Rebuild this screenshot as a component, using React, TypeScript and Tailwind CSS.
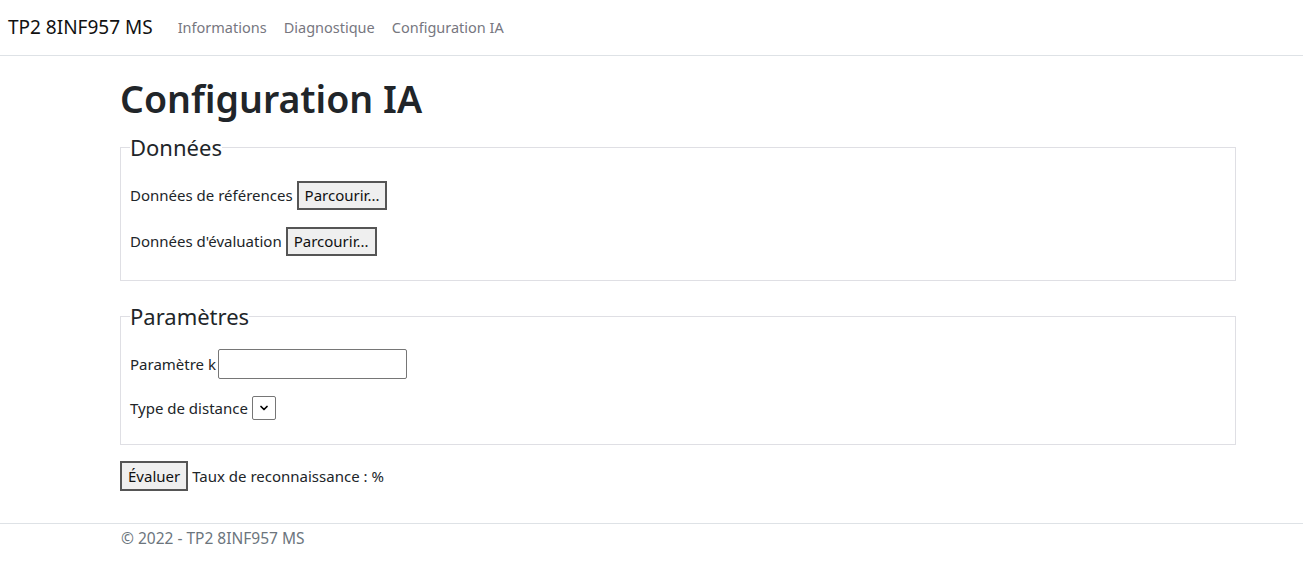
import { ChevronDown } from 'lucide-react';

const font = { fontFamily: '"Noto Sans", "Open Sans", sans-serif' };

function FileRow({ label }: { label: string }) {
  return (
    <div className="flex items-center h-[29px] mb-[17px]">
      <span>{label}</span>
      <button className="ml-[4px] h-[29px] px-[6px] border-2 border-[#555] bg-[#efefef] text-[#111] text-[15px] leading-none">
        Parcourir...
      </button>
    </div>
  );
}

export default function App() {
  return (
    <div className="min-h-[569px] bg-white text-[#212529] text-[15px]" style={font}>
      <nav className="h-[56px] border-b border-[#dee2e6] flex items-center pl-[8px] mb-[19px]">
        <span className="text-[19px] text-[#111]">TP2 8INF957 MS</span>
        <div className="flex gap-[17px] ml-[25px] text-[#77777f] text-[14.5px]">
          <span>Informations</span>
          <span>Diagnostique</span>
          <span>Configuration IA</span>
        </div>
      </nav>

      <main className="ml-[120px] w-[1116px]">
        <h1 className="text-[37.5px] font-semibold leading-[48px] mb-[10px]">Configuration IA</h1>

        <fieldset className="border border-[#dfdfe4] px-[9px] pb-[7px] mb-[21px]">
          <legend className="text-[22px] leading-[29px]">Données</legend>
          <div className="pt-[19px]">
            <FileRow label="Données de références" />
            <FileRow label="Données d'évaluation" />
          </div>
        </fieldset>

        <fieldset className="border border-[#dfdfe4] px-[9px] pb-[9px] mb-[16px]">
          <legend className="text-[22px] leading-[29px]">Paramètres</legend>
          <div className="pt-[18px]">
            <div className="flex items-center h-[30px] mb-[17px]">
              <span>Paramètre k</span>
              <input className="ml-[2px] w-[189px] h-[30px] border border-[#767676] rounded-[2px]" />
            </div>
            <div className="flex items-center h-[24px] mb-[15px]">
              <span>Type de distance</span>
              <div className="ml-[4px] w-[24px] h-[24px] border border-[#767676] rounded-[2px] flex items-center justify-center">
                <ChevronDown size={12} strokeWidth={3.5} className="text-black" />
              </div>
            </div>
          </div>
        </fieldset>

        <div className="flex items-center h-[30px]">
          <button className="h-[30px] px-[6px] border-2 border-[#555] bg-[#efefef] text-[#111]">Évaluer</button>
          <span className="ml-[4px]">Taux de reconnaissance : %</span>
        </div>
      </main>

      <footer className="mt-[32px] border-t border-[#dee2e6] text-[#6c757d] leading-[28px] pl-[121px] text-[15.5px]">
        © 2022 - TP2 8INF957 MS
      </footer>
    </div>
  );
}
